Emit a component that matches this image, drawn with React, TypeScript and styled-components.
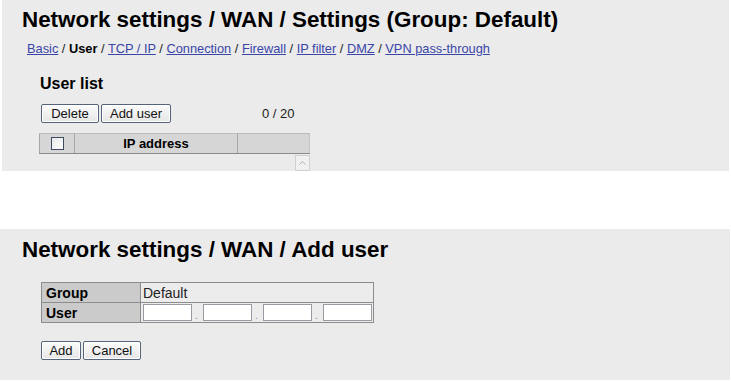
import React from "react";
import styled, { createGlobalStyle } from "styled-components";

const Global = createGlobalStyle`
  html, body { margin: 0; padding: 0; background: #ffffff; }
  body { font-family: "Liberation Sans", Arial, sans-serif; color: #000; }
`;

const Page = styled.div`
  width: 731px;
  height: 381px;
  display: flex;
  flex-direction: column;
  background: #fff;
`;

const Panel = styled.section<{ $ml: number; $mr: number; $h: number; $mt?: number }>`
  background: #ebebeb;
  margin: ${(p) => p.$mt ?? 0}px ${(p) => p.$mr}px 0 ${(p) => p.$ml}px;
  height: ${(p) => p.$h}px;
  box-sizing: border-box;
  display: flex;
  flex-direction: column;
`;

const Title = styled.h1<{ $pt: number; $pl: number }>`
  margin: 0;
  padding: ${(p) => p.$pt}px 0 0 ${(p) => p.$pl}px;
  font-size: 22.4px;
  font-weight: bold;
  line-height: 23px;
  color: #000;
`;

const Nav = styled.nav`
  margin: 10px 0 0 25px;
  font-size: 12.8px;
  line-height: 15px;
  color: #222;
`;

const NavLink = styled.a`
  color: #3a45a8;
  text-decoration: underline;
`;

const Current = styled.b`
  color: #000;
`;

const Sub = styled.h2`
  margin: 19px 0 0 38px;
  font-size: 16px;
  line-height: 18px;
  font-weight: bold;
`;

const Toolbar = styled.div<{ $mt: number; $ml: number }>`
  display: flex;
  align-items: center;
  gap: 2px;
  margin: ${(p) => p.$mt}px 0 0 ${(p) => p.$ml}px;
`;

const Btn = styled.button<{ $w: number }>`
  width: ${(p) => p.$w}px;
  height: 19px;
  padding: 0;
  font-family: "Liberation Sans", Arial, sans-serif;
  font-size: 13px;
  color: #111;
  background: linear-gradient(#fbfbfb, #e6e6e6);
  border: 1px solid #55647a;
  border-radius: 2px;
  box-shadow: inset 0 0 0 1px #fff;
`;

const Count = styled.span`
  margin-left: 89px;
  font-size: 13px;
  color: #222;
`;

const ListTable = styled.div`
  display: grid;
  grid-template-columns: 35px 163px 73px;
  margin: 10px 0 0 37px;
  width: 271px;
  height: 21px;
  background: #d6d6d6;
  border-top: 1px solid #bcbcbc;
  border-bottom: 1px solid #8a8a8a;
  box-sizing: border-box;
`;

const HeadCell = styled.div<{ $last?: boolean }>`
  display: flex;
  align-items: center;
  justify-content: center;
  font-size: 13px;
  font-weight: bold;
  border-left: 1px solid #a8a8a8;
  ${(p) => (p.$last ? "border-right: 1px solid #c4c4c4;" : "")}
`;

const Check = styled.span`
  width: 11px;
  height: 11px;
  border: 1px solid #3d4b62;
  background: linear-gradient(135deg, #e8e8e8, #ffffff);
`;

const ScrollRow = styled.div`
  display: flex;
  justify-content: flex-end;
  width: 271px;
  margin: 1px 0 0 37px;
`;

const ScrollUp = styled.div`
  width: 13px;
  height: 14px;
  border: 1px solid #d0d0d0;
  background: #f0f0f0;
  display: flex;
  align-items: center;
  justify-content: center;
`;

const FormTable = styled.table`
  margin: 21px 0 0 41px;
  border-collapse: collapse;
  width: 333px;
  font-size: 14px;
`;

const Label = styled.th`
  width: 94px;
  height: 19px;
  padding: 0 0 0 4px;
  text-align: left;
  font-weight: bold;
  font-size: 14px;
  background: #cbcbcb;
  border: 1px solid #8c8c8c;
`;

const Value = styled.td`
  padding: 0 0 0 2px;
  font-size: 14px;
  color: #222;
  background: #ececec;
  border: 1px solid #8c8c8c;
  height: 19px;
`;

const IpWrap = styled.div`
  display: flex;
  align-items: flex-end;
  gap: 3px;
  padding: 1px 0 1px 0;
`;

const IpBox = styled.input`
  width: 49px;
  height: 17px;
  padding: 0;
  box-sizing: border-box;
  border: 1px solid #9a9aa2;
  background: #fff;
`;

const Dot = styled.span`
  font-size: 10px;
  color: #888;
  width: 5px;
  line-height: 10px;
`;

export default function App() {
  return (
    <Page>
      <Global />
      <Panel $ml={2} $mr={2} $h={171}>
        <Title $pt={8} $pl={20}>Network settings / WAN / Settings (Group: Default)</Title>
        <Nav>
          <NavLink href="#">Basic</NavLink> / <Current>User</Current> /{" "}
          <NavLink href="#">TCP / IP</NavLink> / <NavLink href="#">Connection</NavLink> /{" "}
          <NavLink href="#">Firewall</NavLink> / <NavLink href="#">IP filter</NavLink> /{" "}
          <NavLink href="#">DMZ</NavLink> / <NavLink href="#">VPN pass-through</NavLink>
        </Nav>
        <Sub>User list</Sub>
        <Toolbar $mt={11} $ml={39}>
          <Btn $w={58}>Delete</Btn>
          <Btn $w={70}>Add user</Btn>
          <Count>0 / 20</Count>
        </Toolbar>
        <ListTable>
          <HeadCell>
            <Check />
          </HeadCell>
          <HeadCell>IP address</HeadCell>
          <HeadCell $last />
        </ListTable>
        <ScrollRow>
          <ScrollUp>
            <svg width="7" height="4" viewBox="0 0 7 4">
              <path d="M0.5 3.5 L3.5 0.5 L6.5 3.5" fill="none" stroke="#b0b0b0" strokeWidth="1" />
            </svg>
          </ScrollUp>
        </ScrollRow>
      </Panel>
      <Panel $ml={0} $mr={1} $h={151} $mt={58}>
        <Title $pt={9} $pl={22}>Network settings / WAN / Add user</Title>
        <FormTable>
          <tbody>
            <tr>
              <Label>Group</Label>
              <Value>Default</Value>
            </tr>
            <tr>
              <Label>User</Label>
              <Value>
                <IpWrap>
                  <IpBox />
                  <Dot>.</Dot>
                  <IpBox />
                  <Dot>.</Dot>
                  <IpBox />
                  <Dot>.</Dot>
                  <IpBox />
                </IpWrap>
              </Value>
            </tr>
          </tbody>
        </FormTable>
        <Toolbar $mt={18} $ml={41}>
          <Btn $w={40}>Add</Btn>
          <Btn $w={58}>Cancel</Btn>
        </Toolbar>
      </Panel>
    </Page>
  );
}
